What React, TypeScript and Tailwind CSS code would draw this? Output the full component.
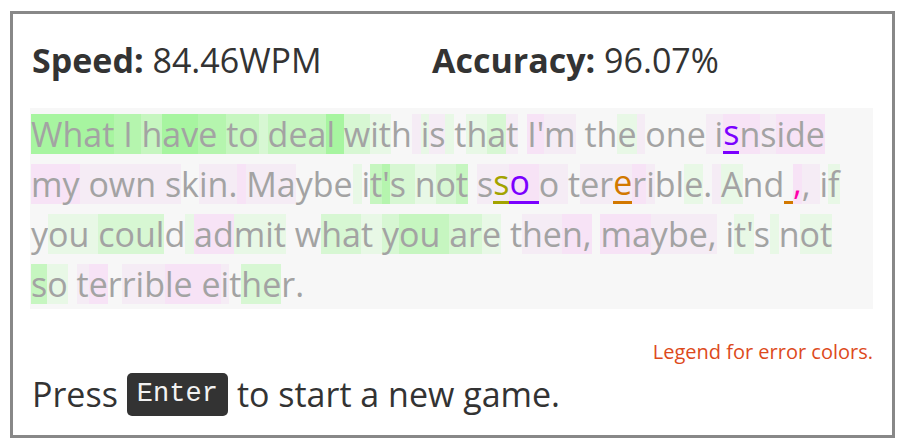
import React from "react";

const FONT = "font-['Open_Sans','Noto_Sans',sans-serif]";

// highlight codes -> background colours
const BG: Record<string, string> = {
  A: "bg-[#a7f5a0]",
  B: "bg-[#b5f5ae]",
  C: "bg-[#c6f6c0]",
  D: "bg-[#d7f7d3]",
  E: "bg-[#e8f8e6]",
  p: "bg-[#f7e3f6]",
  q: "bg-[#f5ecf5]",
  ".": "",
};

// error marks
const ERR: Record<string, string> = {
  purple: "text-[#7b00ff] border-[#7b00ff]",
  olive: "text-[#a3a300] border-[#a3a300]",
  orange: "text-[#d27800] border-[#d27800]",
  pink: "text-[#ff00aa] border-transparent",
};

const lines: { text: string; codes: string; errors: Record<number, string> }[] = [
  {
    text: "What I have to deal with is that I'm the one isnside",
    codes: "AAAABBBCAABBCCDCCCAADEE.qEqE.EDq.ppq...Eq...qqppqppp",
    errors: { 46: "purple" },
  },
  {
    text: "my own skin. Maybe it's not sso o tererible. And ,, if",
    codes: "ppqqqqqq.qqqpqq...E.CBDDEDC.qqppqq.qqqpq..E.qE...pqq.E",
    errors: { 29: "olive", 30: "purple", 31: "purple", 37: "orange", 48: "orange", 49: "pink" },
  },
  {
    text: "you could admit what you are then, maybe, it's not",
    codes: ".EEEDDDD.EppEEE..DDEEDCCCDDE..qqpp.ppqqqq..EE.E.EE",
    errors: {},
  },
  {
    text: "so terrible either.",
    codes: "CE.qp.qqqppppq.DD..",
    errors: {},
  },
];

function Line({ text, codes, errors }: { text: string; codes: string; errors: Record<number, string> }) {
  return (
    <div className="flex h-[50px] items-center">
      {text.split("").map((ch, i) => {
        const err = errors[i];
        return (
          <span
            key={i}
            className={`h-[40px] whitespace-pre ${BG[codes[i]] ?? ""} ${
              err ? `border-b-[3px] leading-[37px] ${ERR[err]}` : "leading-[40px]"
            }`}
          >
            {ch}
          </span>
        );
      })}
    </div>
  );
}

export default function App() {
  return (
    <div className={`w-[900px] h-[439px] bg-white pt-[11px] pl-[10px] ${FONT}`}>
      <div className="w-[885px] h-[427px] border-[3px] border-[#888888] px-[17px] text-[#333333]">
        <div className="flex h-[94px] items-center pl-[2px] pb-[2px] text-[34px]">
          <div className="w-[400px]">
            <span className="font-bold">Speed:</span> 84.46WPM
          </div>
          <div>
            <span className="font-bold">Accuracy:</span> 96.07%
          </div>
        </div>
        <div className="h-[201px] w-[843px] bg-[#f7f7f7] pl-[1px] pt-[1px] text-[34px] text-[#a3a3a3]">
          {lines.map((l, i) => (
            <Line key={i} {...l} />
          ))}
        </div>
        <div className="mt-[32px] flex justify-end pr-[2px] text-[20px] leading-[22px] text-[#dd4a1c]">
          Legend for error colors.
        </div>
        <div className="mt-[8px] flex items-center pl-[2px] text-[34px] leading-[46px]">
          <span>Press</span>
          <span className="mx-[9px] rounded-[5px] bg-[#333333] px-[10px] font-['Liberation_Mono',monospace] text-[27px] leading-[43px] text-[#f2f2f2]">
            Enter
          </span>
          <span>to start a new game.</span>
        </div>
      </div>
    </div>
  );
}
